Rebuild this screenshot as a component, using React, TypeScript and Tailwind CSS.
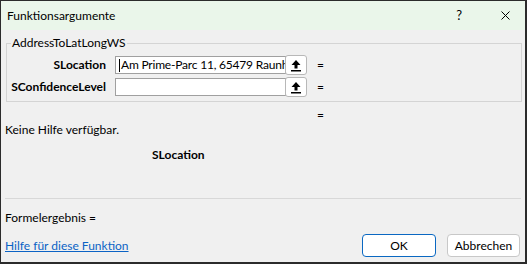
import React from 'react';

const FONT = { fontFamily: 'Lato, "Noto Sans", sans-serif' };

function ArgRow({ label, value }: { label: string; value: string }) {
  return (
    <div className="flex h-[20px] items-center">
      <span className="w-[99px] whitespace-nowrap text-right text-[12px] font-bold text-black">{label}</span>
      <div className="ml-[9px] flex h-[20px] items-center">
        <div className="flex h-[18px] w-[171px] items-center overflow-hidden whitespace-nowrap border border-[#a0a0a0] bg-white pl-[3px] text-[12px] tracking-[-0.2px] text-black">
          {value && <span className="mr-[1px] h-[13px] w-px shrink-0 bg-black" />}
          {value}
        </div>
        <div className="-ml-[1px] flex h-[20px] w-[22px] items-center justify-center rounded-[3px] border border-[#b8b8b8] bg-white">
          <svg width="12" height="13" viewBox="0 0 12 13">
            <path d="M6 1 L10.5 6 L7.5 6 L7.5 9.5 L4.5 9.5 L4.5 6 L1.5 6 Z" fill="#000" />
            <rect x="1" y="11" width="10" height="1.5" fill="#000" />
          </svg>
        </div>
      </div>
      <span className="ml-[10px] text-[12px] text-black">=</span>
    </div>
  );
}

export default function App() {
  return (
    <div
      className="flex h-[264px] w-[527px] flex-col overflow-hidden border-l border-t border-r-2 border-b-2 border-[#2b2b2b] bg-[#f0f0f0] text-[12px] text-black"
      style={FONT}
    >
      {/* title bar */}
      <div className="flex h-[29px] shrink-0 items-center bg-[#eaf6ea] pl-[6px] pr-[15px]">
        <span className="flex-1">Funktionsargumente</span>
        <span className="mr-[39px] text-[13px]">?</span>
        <svg width="9" height="9" viewBox="0 0 9 9">
          <path d="M0.5 0.5 L8.5 8.5 M8.5 0.5 L0.5 8.5" stroke="#000" strokeWidth="1" />
        </svg>
      </div>

      <div className="flex flex-1 flex-col px-[4px]">
        {/* group box */}
        <div className="relative ml-[1px] mt-[13px] h-[59px] w-[516px] shrink-0 border border-[#d4d4d4]">
          <span className="absolute -top-[8px] left-[4px] bg-[#f0f0f0] px-[1px] leading-[14px]">AddressToLatLongWS</span>
          <div className="flex flex-col gap-[2px] pt-[11px]">
            <ArgRow label="SLocation" value="Am Prime-Parc 11, 65479 Raunh" />
            <ArgRow label="SConfidenceLevel" value="" />
          </div>
        </div>

        <div className="ml-[312px] mt-[6px] h-[14px] leading-[14px]">=</div>
        <div className="h-[16px] leading-[16px]">Keine Hilfe verfügbar.</div>
        <div className="ml-[147px] mt-[9px] h-[16px] font-bold leading-[16px]">SLocation</div>

        <div className="mt-[35px] h-px w-[516px] shrink-0 bg-[#d8d8d8]" />

        <div className="mt-[11px] h-[16px] leading-[16px]">Formelergebnis =</div>

        <div className="mt-[8px] flex h-[23px] items-center">
          <a className="flex-1 text-[#0b63c5] underline" href="#">
            Hilfe für diese Funktion
          </a>
          <button className="flex h-[23px] w-[74px] items-center justify-center rounded-[4px] border border-[#0a68c2] bg-white">
            OK
          </button>
          <button className="ml-[11px] mr-[1px] flex h-[23px] w-[73px] items-center justify-center rounded-[4px] border border-[#c8c8c8] bg-white">
            Abbrechen
          </button>
        </div>
      </div>
    </div>
  );
}
